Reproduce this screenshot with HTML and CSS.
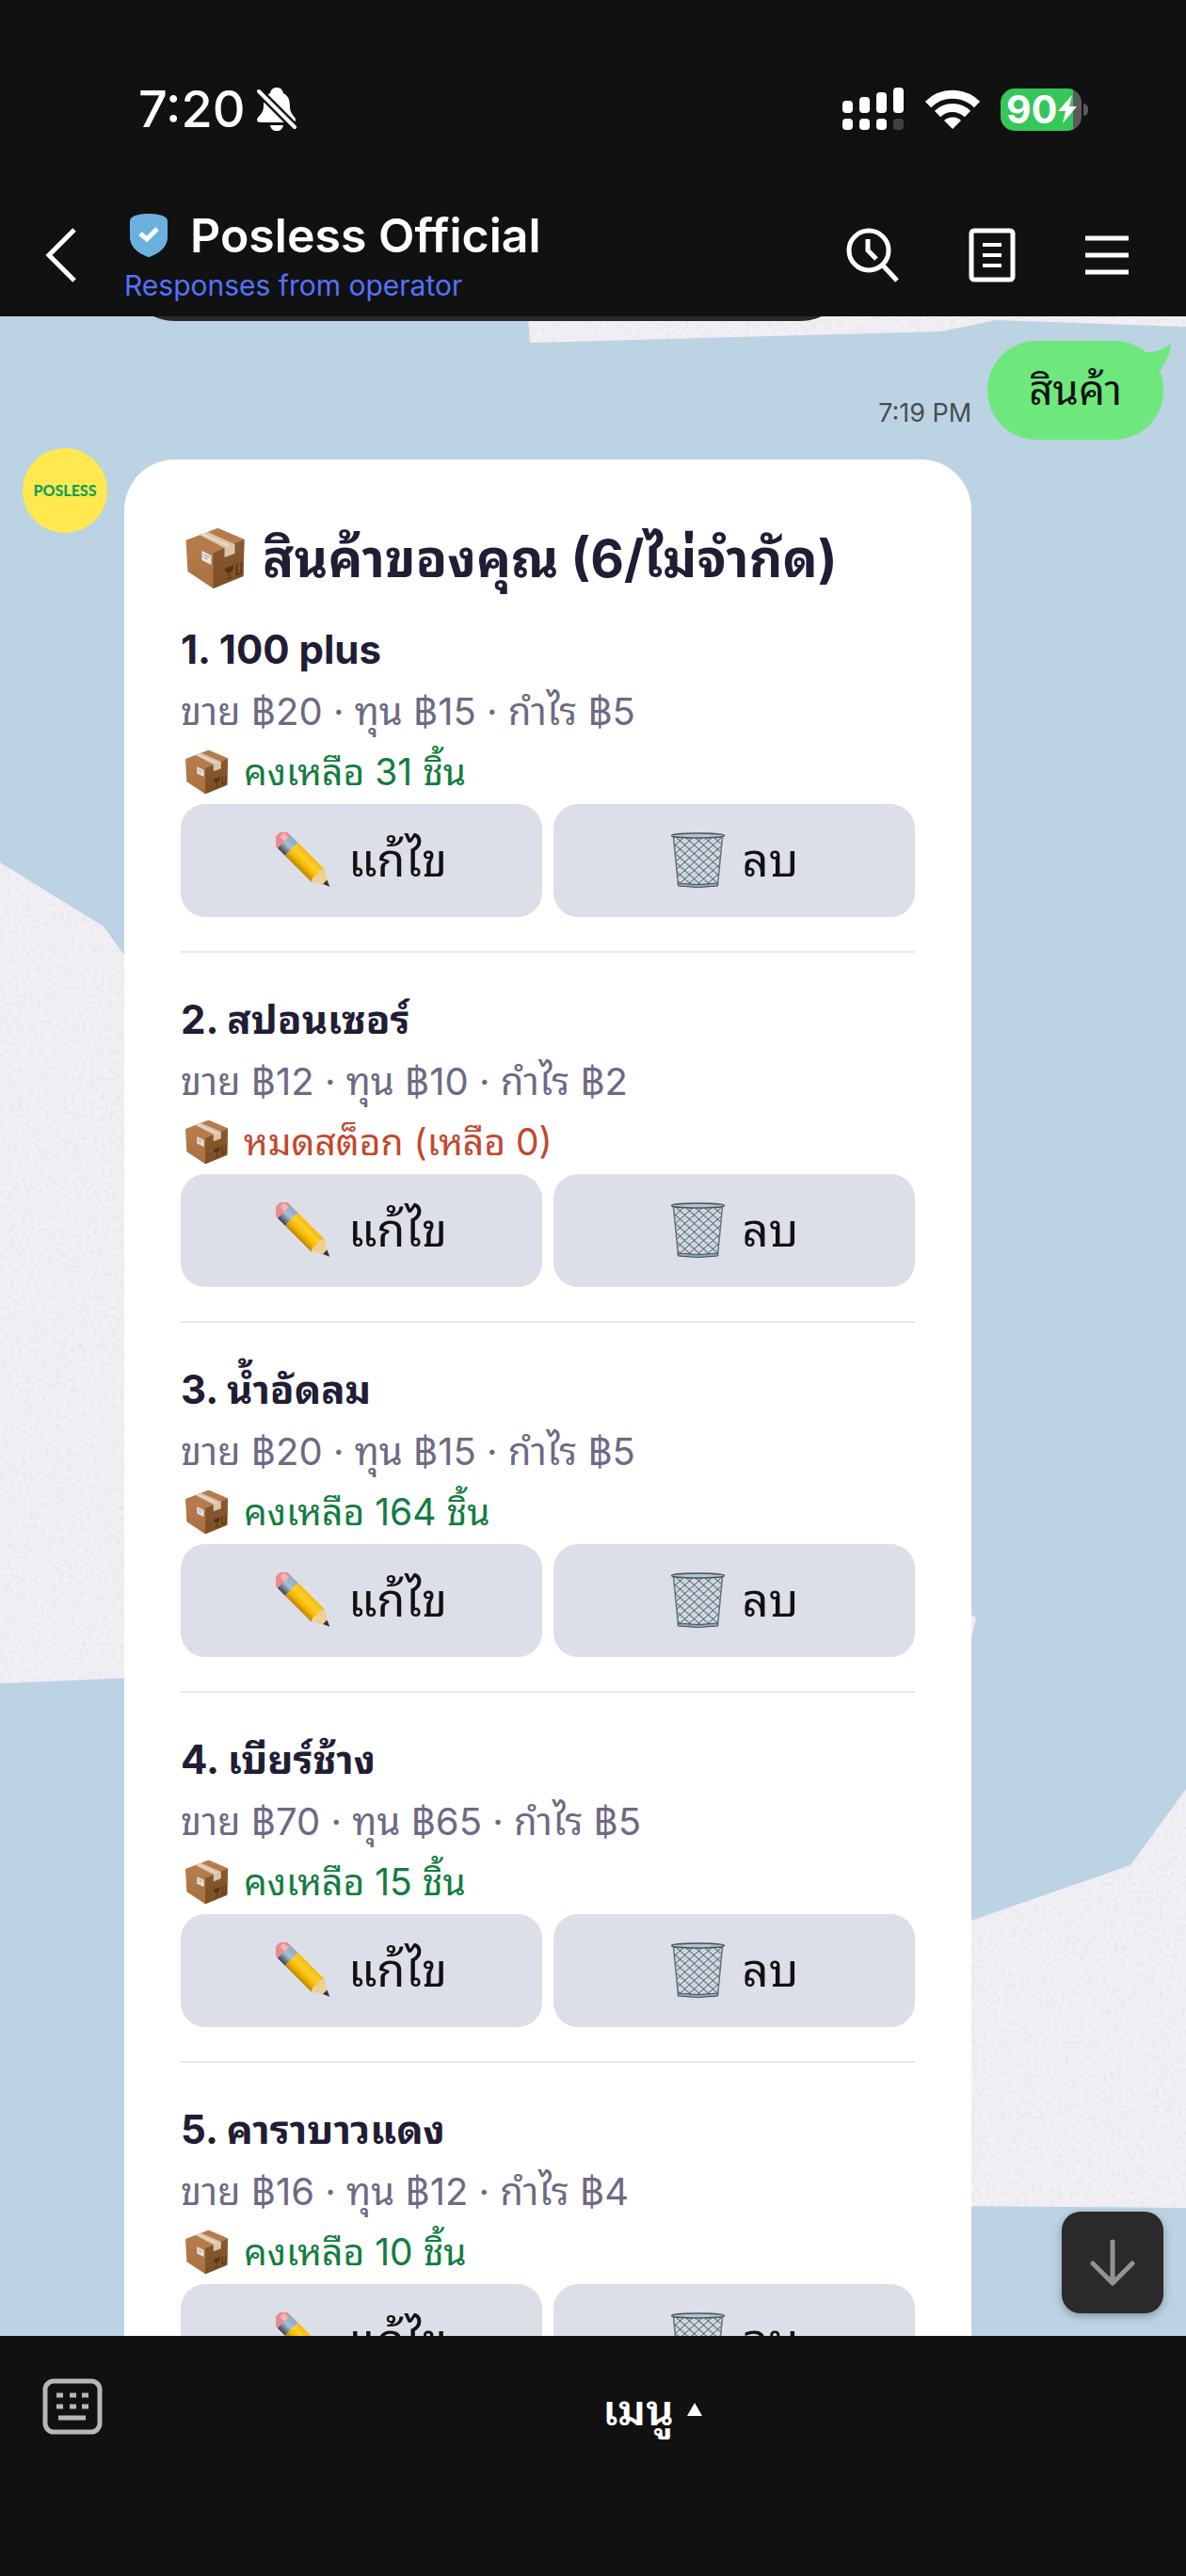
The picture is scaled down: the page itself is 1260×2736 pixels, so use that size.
FILE: index.html
```html
<!DOCTYPE html>
<html lang="th">
<head>
    <meta charset="UTF-8">
    <meta name="viewport" content="width=device-width, initial-scale=1.0">
    <title>Posless Official</title>
    <link rel="stylesheet" href="styles.css">
</head>
<body>
    <!-- ไอคอนที่ใช้ซ้ำ -->
    <svg class="icon-defs" aria-hidden="true">
        <defs>
            <linearGradient id="boxLeft" x1="0" y1="0" x2="0" y2="1">
                <stop offset="0" stop-color="#bd8152"/>
                <stop offset="1" stop-color="#a96f3f"/>
            </linearGradient>
            <linearGradient id="boxRight" x1="0" y1="0" x2="0" y2="1">
                <stop offset="0" stop-color="#8a5a2e"/>
                <stop offset="1" stop-color="#7c4f26"/>
            </linearGradient>
            <linearGradient id="pencilBody" x1="0" y1="0" x2="0" y2="1">
                <stop offset="0" stop-color="#f4b90c"/>
                <stop offset="0.35" stop-color="#ffcf2a"/>
                <stop offset="0.65" stop-color="#f8b900"/>
                <stop offset="1" stop-color="#b98408"/>
            </linearGradient>
            <linearGradient id="pencilMetal" x1="0" y1="0" x2="0" y2="1">
                <stop offset="0" stop-color="#8fa9c2"/>
                <stop offset="0.5" stop-color="#a9bfd4"/>
                <stop offset="1" stop-color="#3c3f44"/>
            </linearGradient>
            <pattern id="mesh" width="10" height="9" patternUnits="userSpaceOnUse">
                <path d="M0 0L10 9M10 0L0 9" stroke="#5c6873" stroke-width="1.1"/>
                <path d="M0 4L5 0M5 9L10 5" stroke="#92abc3" stroke-width="0.9"/>
            </pattern>
        </defs>
        <symbol id="icon-box" viewBox="0 0 64 66">
            <path d="M1 14L35 1L63 13L62 52L30 65L3 47Z" fill="url(#boxLeft)"/>
            <path d="M30 27L63 13L62 52L30 65Z" fill="url(#boxRight)"/>
            <path d="M1 14L35 1L63 13L30 27Z" fill="#b57b4b"/>
            <path d="M15 8L24 5L53 18L53 28L42 32L42 22Z" fill="#d9c5ac"/>
            <path d="M18 7L47 20" stroke="#eadccb" stroke-width="2"/>
            <path d="M18 25L28 30V40L18 35Z" fill="#e4e5e4"/>
            <path d="M20 29L26 32M20 32L24 34" stroke="#8f9596" stroke-width="1"/>
            <path d="M43 44L51 41Q51 47 47 48Q43 49 43 44ZM47 48V54M44 55L50 53" fill="#54341a" stroke="#54341a" stroke-width="1"/>
            <path d="M55 50V39M60 48V37M54 51L61 48" stroke="#54341a" stroke-width="1.4" fill="none"/>
        </symbol>
        <symbol id="icon-pencil" viewBox="0 0 58 58">
            <g transform="rotate(45 4 4)">
                <rect x="1" y="-5" width="16" height="19" rx="7" fill="#e98c92"/>
                <rect x="4" y="-2" width="9" height="6" rx="3" fill="#f9b6b8"/>
                <path d="M11 -5H22V14H11Z" fill="url(#pencilMetal)"/>
                <path d="M22 -5H61V14H22Z" fill="url(#pencilBody)"/>
                <path d="M61 -5L76 4L61 14Q57 10 60 4Q57 0 61 -5Z" fill="#efcf94"/>
                <path d="M71 1L78 4L71 7Z" fill="#33363b"/>
            </g>
        </symbol>
        <symbol id="icon-trash" viewBox="0 0 58 60">
            <path d="M3 5H55L50 56H8Z" fill="#dde3ea"/>
            <path d="M3 5H55L50 56H8Z" fill="url(#mesh)" stroke="#66727d" stroke-width="1.500"/>
            <ellipse cx="29" cy="3.500" rx="28" ry="2.500" fill="#a9c6e2" stroke="#54504c" stroke-width="1.500"/>
            <path d="M8 54Q29 57 50 54V57Q29 60 8 57Z" fill="#7fa7cf" stroke="#54504c" stroke-width="1"/>
        </symbol>
    </svg>

    <header class="header">
        <div class="status-bar">
            <div class="status-left">
                <span class="clock">7:20</span>
                <svg class="icon-bell" viewBox="0 0 42 46" aria-hidden="true">
                    <path d="M21 0C25 0 27 2 28 6C34 9 35 14 35 21C35 28 41 31 41 34C41 36 40 37 38 37H4C1 37 0 36 0 34C1 30 7 28 7 20C7 13 9 8 14 6C15 2 17 0 21 0ZM14 40H28C27 44 25 46 21 46C17 46 15 44 14 40Z" fill="#fff"/>
                    <path d="M1 3L41 43" stroke="#111" stroke-width="9"/>
                    <path d="M2 4L40 42" stroke="#fff" stroke-width="4" stroke-linecap="round"/>
                </svg>
            </div>
            <div class="status-right">
                <svg class="icon-signal" viewBox="0 0 66 46" aria-hidden="true">
                    <g fill="#fff">
                        <rect x="0" y="14" width="11" height="13" rx="4"/>
                        <rect x="18" y="10" width="11" height="17" rx="4"/>
                        <rect x="36" y="5" width="11" height="22" rx="4"/>
                        <rect x="54" y="0" width="11" height="27" rx="4"/>
                        <rect x="0" y="33" width="11" height="12" rx="4"/>
                        <rect x="18" y="33" width="11" height="12" rx="4"/>
                        <rect x="36" y="33" width="11" height="12" rx="4"/>
                    </g>
                    <rect x="54" y="33" width="11" height="12" rx="4" fill="#414141"/>
                </svg>
                <svg class="icon-wifi" viewBox="0 0 58 43" aria-hidden="true">
                    <path d="M3 16A37 37 0 0 1 55 16" fill="none" stroke="#fff" stroke-width="9"/>
                    <path d="M13 26A23 23 0 0 1 45 26" fill="none" stroke="#fff" stroke-width="9"/>
                    <path d="M29 42L20 33A13 13 0 0 1 38 33Z" fill="#fff"/>
                </svg>
                <div class="battery">
                    <span class="battery-level">90</span>
                    <svg class="icon-bolt" viewBox="0 0 20 30" aria-hidden="true">
                        <path d="M15 0L0 17H8L5 30L20 12H12Z" fill="#fff"/>
                    </svg>
                </div>
            </div>
        </div>
        <div class="chat-bar">
            <button class="icon-button" aria-label="Back">
                <svg width="34" height="58" viewBox="0 0 34 58"><path d="M32 2L5 29L32 56" fill="none" stroke="#fff" stroke-width="5"/></svg>
            </button>
            <div class="chat-name">
                <div class="chat-title">
                    <svg width="40" height="46" viewBox="0 0 40 46" aria-hidden="true">
                        <path d="M20 0C28 0 34 1 38 4Q40 5 40 8V25C40 35 31 42 23 45Q20 47 17 45C9 42 0 35 0 25V8Q0 5 2 4C6 1 12 0 20 0Z" fill="#6bb1dd"/>
                        <path d="M11 21L18 27L29 16" fill="none" stroke="#fff" stroke-width="5"/>
                    </svg>
                    <h1>Posless Official</h1>
                </div>
                <p class="chat-subtitle">Responses from operator</p>
            </div>
            <div class="chat-actions">
                <button class="icon-button" aria-label="Search">
                    <svg width="58" height="60" viewBox="0 0 58 60" fill="none" stroke="#fff" stroke-width="5">
                        <circle cx="25" cy="25" r="21"/>
                        <path d="M24 13V25L33 34M40 41L55 57"/>
                    </svg>
                </button>
                <button class="icon-button" aria-label="Notes">
                    <svg width="50" height="58" viewBox="0 0 50 58" fill="none" stroke="#fff" stroke-width="5">
                        <rect x="3" y="3" width="44" height="52" rx="3"/>
                        <path d="M15 18H35M15 29H35M15 40H35" stroke-width="4"/>
                    </svg>
                </button>
                <button class="icon-button" aria-label="Menu">
                    <svg width="48" height="46" viewBox="0 0 48 46" fill="none" stroke="#fff" stroke-width="5">
                        <path d="M1 5H47M1 23H47M1 41H47"/>
                    </svg>
                </button>
            </div>
        </div>
    </header>

    <main class="chat">
        <svg class="wallpaper" viewBox="0 0 1260 2145" preserveAspectRatio="xMidYMin slice" aria-hidden="true">
            <filter id="grain" x="0" y="0" width="100%" height="100%">
                <feTurbulence type="fractalNoise" baseFrequency="0.25" numOctaves="2" seed="4"/>
                <feColorMatrix values="0 0 0 0 0.75  0 0 0 0 0.74  0 0 0 0 0.76  1.600 0 0 0 -0.700"/>
                <feComposite in2="SourceGraphic" operator="in" result="noise"/>
                <feMerge>
                    <feMergeNode in="SourceGraphic"/>
                    <feMergeNode in="noise"/>
                </feMerge>
            </filter>
            <g fill="#f2f0f4" filter="url(#grain)">
                <path d="M561 0L563 28L1000 16L1058 4L1260 11V0Z"/>
                <path d="M0 580L110 648L140 690V1446L0 1452Z"/>
                <path d="M1020 1372L1037 1382L1030 1412L1020 1410Z"/>
                <path d="M1020 1708L1201 1645L1260 1564V2009L1020 2007Z"/>
            </g>
        </svg>

        <div class="previous-message"></div>

        <div class="message-out">
            <time class="time">7:19 PM</time>
            <div class="bubble">
                สินค้า
                <svg class="bubble-tail" viewBox="0 0 34 34" aria-hidden="true"><path d="M0 9Q16 11 31 0Q30 14 20 28L6 30Z" fill="#6ee87d"/></svg>
            </div>
        </div>

        <div class="message-in">
            <div class="avatar">POSLESS</div>
            <article class="card">
                <h2><svg class="emoji-large"><use href="#icon-box"/></svg>สินค้าของคุณ (6/ไม่จำกัด)</h2>

                <section class="item">
                    <h3>1. 100 plus</h3>
                    <p class="price">ขาย ฿20 · ทุน ฿15 · กำไร ฿5</p>
                    <p class="stock"><svg class="emoji-small"><use href="#icon-box"/></svg>คงเหลือ 31 ชิ้น</p>
                    <div class="actions">
                        <button><svg class="emoji"><use href="#icon-pencil"/></svg>แก้ไข</button>
                        <button><svg class="emoji"><use href="#icon-trash"/></svg>ลบ</button>
                    </div>
                </section>

                <section class="item">
                    <h3>2. สปอนเซอร์</h3>
                    <p class="price">ขาย ฿12 · ทุน ฿10 · กำไร ฿2</p>
                    <p class="stock out"><svg class="emoji-small"><use href="#icon-box"/></svg>หมดสต็อก (เหลือ 0)</p>
                    <div class="actions">
                        <button><svg class="emoji"><use href="#icon-pencil"/></svg>แก้ไข</button>
                        <button><svg class="emoji"><use href="#icon-trash"/></svg>ลบ</button>
                    </div>
                </section>

                <section class="item">
                    <h3>3. น้ำอัดลม</h3>
                    <p class="price">ขาย ฿20 · ทุน ฿15 · กำไร ฿5</p>
                    <p class="stock"><svg class="emoji-small"><use href="#icon-box"/></svg>คงเหลือ 164 ชิ้น</p>
                    <div class="actions">
                        <button><svg class="emoji"><use href="#icon-pencil"/></svg>แก้ไข</button>
                        <button><svg class="emoji"><use href="#icon-trash"/></svg>ลบ</button>
                    </div>
                </section>

                <section class="item">
                    <h3>4. เบียร์ช้าง</h3>
                    <p class="price">ขาย ฿70 · ทุน ฿65 · กำไร ฿5</p>
                    <p class="stock"><svg class="emoji-small"><use href="#icon-box"/></svg>คงเหลือ 15 ชิ้น</p>
                    <div class="actions">
                        <button><svg class="emoji"><use href="#icon-pencil"/></svg>แก้ไข</button>
                        <button><svg class="emoji"><use href="#icon-trash"/></svg>ลบ</button>
                    </div>
                </section>

                <section class="item">
                    <h3>5. คาราบาวแดง</h3>
                    <p class="price">ขาย ฿16 · ทุน ฿12 · กำไร ฿4</p>
                    <p class="stock"><svg class="emoji-small"><use href="#icon-box"/></svg>คงเหลือ 10 ชิ้น</p>
                    <div class="actions">
                        <button><svg class="emoji"><use href="#icon-pencil"/></svg>แก้ไข</button>
                        <button><svg class="emoji"><use href="#icon-trash"/></svg>ลบ</button>
                    </div>
                </section>
            </article>
        </div>

        <button class="scroll-down" aria-label="Scroll to bottom">
            <svg width="50" height="50" viewBox="0 0 50 50" fill="none" stroke="#939393" stroke-width="5" stroke-linecap="round" stroke-linejoin="round">
                <path d="M25 3V47M4 26L25 47L46 26"/>
            </svg>
        </button>
    </main>

    <footer class="footer">
        <button class="icon-button" aria-label="Keyboard">
            <svg width="64" height="60" viewBox="0 0 64 60" fill="none" stroke="#b7b7b7" stroke-width="5">
                <rect x="3" y="3" width="58" height="54" rx="9"/>
                <path d="M15 18H22M29 18H36M42 18H49M15 30H22M29 30H36M42 30H49M17 42H46"/>
            </svg>
        </button>
        <button class="menu-button">เมนู
            <svg width="16" height="14" viewBox="0 0 16 14"><path d="M8 0L16 14H0Z" fill="#fff"/></svg>
        </button>
    </footer>
</body>
</html>
```
FILE: styles.css
```css
* { box-sizing: border-box; }
body {
    margin: 0;
    height: 100vh;
    display: flex;
    flex-direction: column;
    background: #111;
    color: #111;
    font-family: Inter, Thonburi, "Noto Sans Thai Looped", Loma, Garuda, Waree, Umpush, "Noto Sans Thai", sans-serif;
}
h1, h2, h3, p { margin: 0; }
button { font-family: inherit; border: none; padding: 0; cursor: pointer; }
svg { display: block; flex: none; }
.icon-defs { position: absolute; width: 0; height: 0; }
.icon-button { background: none; display: flex; }

/* header */
.header { flex: none; height: 336px; color: #fff; }
.status-bar {
    display: flex;
    justify-content: space-between;
    align-items: center;
    padding: 84px 104px 0 147px;
}
.status-left, .status-right { display: flex; align-items: center; }
.status-left { gap: 12px; }
.status-right { gap: 22px; }
.clock { font-size: 54px; line-height: 64px; font-weight: 500; }
.icon-bell { width: 42px; height: 46px; }
.icon-signal { width: 66px; height: 46px; }
.icon-wifi { width: 58px; height: 43px; }
.battery {
    position: relative;
    display: flex;
    align-items: center;
    gap: 1px;
    width: 86px;
    height: 45px;
    margin-right: 7px;
    padding-left: 6px;
    border-radius: 15px;
    background: linear-gradient(to right, #35c759 77px, #5a5a5a 77px);
}
.battery::after {
    content: "";
    position: absolute;
    right: -7px;
    top: 16px;
    width: 5px;
    height: 13px;
    border-radius: 0 5px 5px 0;
    background: #5a5a5a;
}
.battery-level { font-size: 41px; line-height: 45px; font-weight: 700; }
.icon-bolt { width: 20px; height: 30px; }

.chat-bar { display: flex; align-items: center; padding: 70px 60px 0 47px; }
.chat-name { margin-left: 51px; flex: 1; }
.chat-title { display: flex; align-items: center; gap: 24px; padding-left: 6px; }
.chat-title h1 { font-size: 50px; line-height: 64px; font-weight: 600; }
.chat-subtitle { font-size: 30px; line-height: 42px; color: #5472ff; }
.chat-actions { display: flex; align-items: center; gap: 73px; }

/* chat */
.chat {
    position: relative;
    flex: 1;
    min-height: 0;
    overflow: hidden;
    background: #bcd3e3;
}
.wallpaper { position: absolute; top: 0; left: 0; width: 100%; height: 100%; }
.chat > div { position: relative; }
.previous-message {
    height: 108px;
    margin: -103px 356px 0 132px;
    border-radius: 54px;
    background: #2a2a2a;
}
.message-out {
    display: flex;
    justify-content: flex-end;
    align-items: flex-end;
    gap: 17px;
    padding: 21px 24px 0;
}
.time { font-size: 27px; line-height: 32px; margin-bottom: 12px; color: #484d51; }
.bubble {
    position: relative;
    padding: 0 44px;
    border-radius: 52px;
    background: #6ee87d;
    font-size: 44px;
    line-height: 105px;
}
.bubble-tail { position: absolute; top: 3px; right: -11px; width: 34px; height: 34px; }
.message-in { display: flex; align-items: flex-start; padding: 9px 24px 0; gap: 18px; }
.avatar {
    flex: none;
    width: 90px;
    height: 90px;
    border-radius: 50%;
    background: #ffe94e;
    color: #12a05c;
    font: 900 16px/90px Lato, sans-serif;
    text-align: center;
}
.card {
    flex: 0 1 900px;
    margin-top: 12px;
    padding: 60px;
    border-radius: 54px;
    background: #fff;
}
.card h2 {
    display: flex;
    align-items: center;
    gap: 18px;
    margin-bottom: 18px;
    padding-left: 4px;
    font-size: 55px;
    line-height: 90px;
    font-weight: 700;
    color: #211d35;
}
.emoji-large { width: 65px; height: 66px; }
.emoji-small { width: 47px; height: 48px; }
.emoji { width: 59px; height: 60px; }
.item + .item { margin-top: 36px; padding-top: 37px; border-top: 2px solid #e8e8ea; }
.item h3 { font-size: 42px; line-height: 68px; font-weight: 700; color: #211d35; }
.price, .stock { line-height: 64px; }
.price { font-size: 40px; color: #6e6983; }
.stock { display: flex; align-items: center; gap: 16px; padding-left: 4px; font-size: 39px; color: #117d3f; }
.stock.out { color: #c4472b; }
.actions { display: flex; gap: 12px; margin-top: 2px; }
.actions button {
    flex: 1;
    display: flex;
    align-items: center;
    justify-content: center;
    gap: 18px;
    border-radius: 26px;
    background: #dcdee8;
    color: #111;
    font-size: 49px;
    line-height: 120px;
}
.scroll-down {
    position: absolute;
    right: 24px;
    bottom: 24px;
    width: 108px;
    height: 108px;
    display: flex;
    align-items: center;
    justify-content: center;
    border-radius: 20px;
    background: #2a2a2a;
    box-shadow: 0 3px 10px rgba(0, 0, 0, 0.3);
}

/* footer */
.footer { flex: none; height: 255px; display: flex; align-items: flex-start; padding: 45px 45px 0; }
.menu-button {
    flex: 1;
    display: flex;
    align-items: center;
    justify-content: center;
    gap: 14px;
    margin-left: 62px;
    background: none;
    color: #fff;
    font-size: 46px;
    line-height: 66px;
    font-weight: 600;
}
```
